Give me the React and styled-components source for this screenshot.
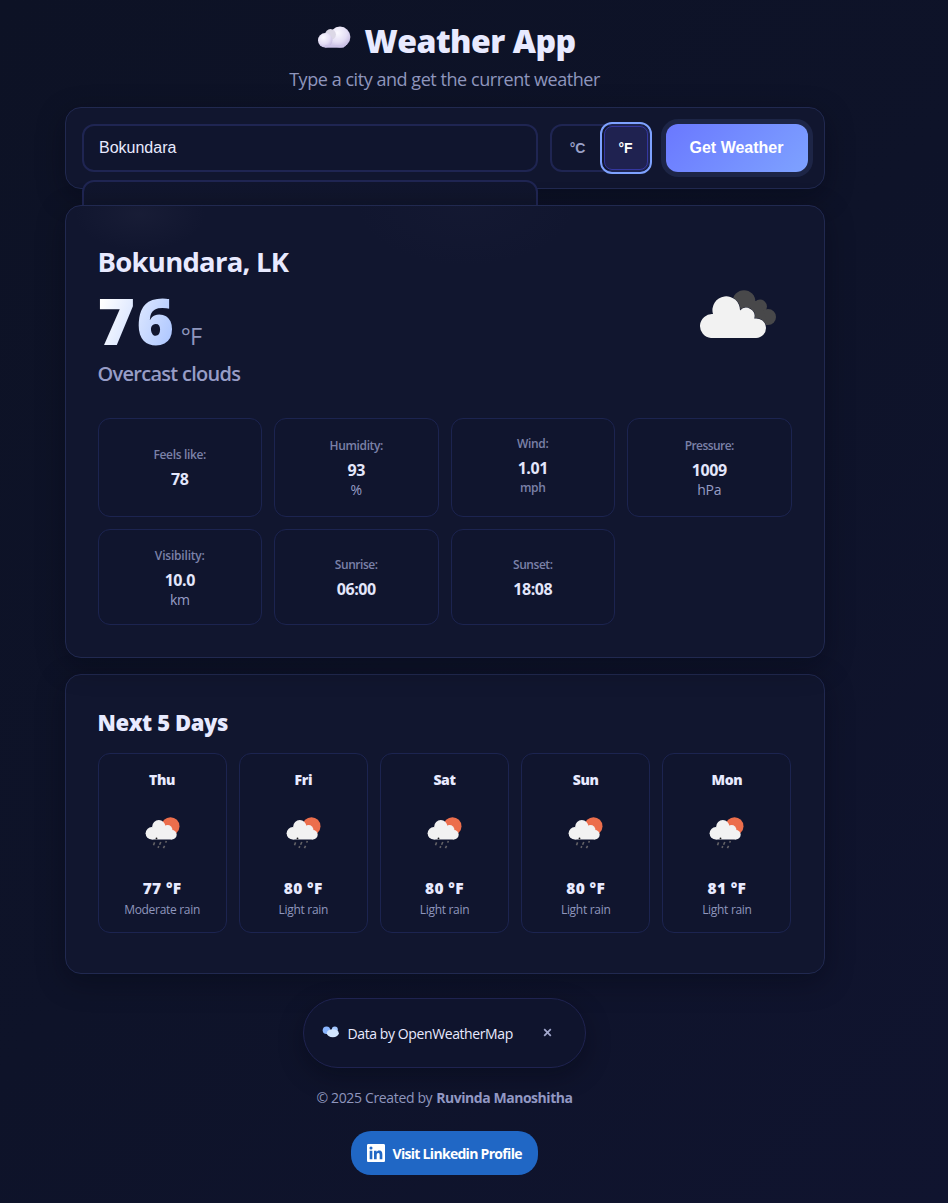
import React from "react";
import styled, { createGlobalStyle } from "styled-components";

const GlobalStyle = createGlobalStyle`
  *, *::before, *::after { box-sizing: border-box; }
  html { background: #0f132b; }
  body {
    margin: 0;
    font-family: "Open Sans", "Noto Sans", sans-serif;
    color: #e8eaff;
  }
`;

const Page = styled.div`
  min-height: 1203px;
  padding: 20px 123px 28px 64.5px;
  background: linear-gradient(135deg, #0d1225 0%, #0e1329 50%, #10142f 100%);
  overflow: hidden;
`;

const Column = styled.main`
  width: 760px;
  display: flex;
  flex-direction: column;
  align-items: center;
`;

const Line = styled.span`
  display: block;
  white-space: nowrap;
  font-size: ${(p) => p.$size}px;
  line-height: ${(p) => p.$lh}px;
  font-weight: ${(p) => p.$weight || 400};
  letter-spacing: ${(p) => p.$track || 0}px;
  color: ${(p) => p.$color || "#e8eaff"};
`;

const Header = styled.header`
  display: flex;
  flex-direction: column;
  align-items: center;
  height: 87px;
`;

const Brand = styled.h1`
  display: flex;
  gap: 13px;
  margin: 0 0 4px 4px;
  height: 42px;
  svg { margin-top: 5px; }
`;

const Panel = styled.section`
  width: 100%;
  border: 1px solid #212950;
  border-radius: 16px;
  background: #11162f;
  box-shadow: 0 8px 28px rgba(4, 6, 14, 0.34);
`;

const SearchPanel = styled(Panel)`
  display: flex;
  height: 82px;
  padding: 16px;
`;

const Field = styled.div`
  position: relative;
  width: 456px;
  height: 48px;
  margin-right: 12px;
`;

const Input = styled.input`
  width: 100%;
  height: 100%;
  padding: 0 15.5px;
  border: 2px solid #1f2552;
  border-radius: 12px;
  outline: none;
  background: #10152e;
  color: #e8eaff;
  font: 16px "Liberation Sans", Arial, sans-serif;
`;

const Suggestions = styled.div`
  position: absolute;
  top: 56px;
  left: 0;
  width: 100%;
  height: 60px;
  border: 2px solid #1f2552;
  border-radius: 12px;
  background: linear-gradient(#11162e, #0e1326);
`;

const UnitToggle = styled.div`
  display: flex;
  width: 100px;
  height: 48px;
  margin-right: 16px;
  border: 2px solid #1f2552;
  border-radius: 12px;
  background: #10152e;
`;

const UnitButton = styled.button`
  width: ${(p) => (p.$active ? 44 : 52)}px;
  height: 44px;
  padding: 0;
  border: 1px solid ${(p) => (p.$active ? "#3437a0" : "transparent")};
  border-radius: 8px;
  outline: ${(p) => (p.$active ? "2px solid #7ea2ff" : "none")};
  outline-offset: 2px;
  background: ${(p) => (p.$active ? "#1f2250" : "transparent")};
  color: ${(p) => (p.$active ? "#ffffff" : "#9aa0c8")};
  font: bold 14px "Liberation Sans", Arial, sans-serif;
`;

const SubmitButton = styled.button`
  width: 142px;
  height: 48px;
  padding: 0;
  border: 0;
  border-radius: 12px;
  background: linear-gradient(135deg, #6a78ff, #7ea2ff);
  box-shadow: 0 0 0 5px #1d2546;
  color: #fff;
  font: bold 16px "Liberation Sans", Arial, sans-serif;
`;

const CurrentPanel = styled(Panel)`
  position: relative;
  height: 453px;
  margin-top: 16px;
  padding: 32px;
  background:
    radial-gradient(ellipse 65px 36px at 74px 8px, rgba(60, 62, 90, 0.16), transparent),
    radial-gradient(ellipse 110px 60px at 400px 0px, rgba(50, 52, 84, 0.08), transparent),
    #11162f;
`;

const Summary = styled.div`
  display: flex;
  justify-content: space-between;
  height: 180px;
  padding-top: 4px;
  svg { margin: 47px 13.5px 0 0; }
`;

const TempRow = styled.div`
  display: flex;
  align-items: baseline;
  gap: 5px;
  height: 78px;
`;

const Temp = styled(Line)`
  background: linear-gradient(110deg, #ffffff 10%, #a4c0ff 100%);
  background-clip: text;
  -webkit-background-clip: text;
  color: transparent;
`;

const Stats = styled.div`
  display: grid;
  grid-template-columns: repeat(4, 1fr);
  grid-template-rows: 99px 96px;
  gap: 12px;
`;

const Tile = styled.div`
  display: flex;
  flex-direction: column;
  align-items: center;
  justify-content: center;
  border: 1px solid #1c2450;
  border-radius: 12px;
  background: #10152e;
`;

const Unit = styled(Line)`
  margin-bottom: ${(p) => (p.$small ? 9 : 4)}px;
`;

const ForecastPanel = styled(Panel)`
  height: 300px;
  margin-top: 16px;
  padding: 31px 32px;
`;

const Days = styled.div`
  display: grid;
  grid-template-columns: repeat(5, 1fr);
  gap: 12px;
  margin-top: 15px;
`;

const DayTile = styled(Tile)`
  justify-content: flex-start;
  height: 180px;
  padding-top: 16px;
  svg { margin: 18px 0 19px 1px; }
`;

const Notice = styled.div`
  display: flex;
  align-items: center;
  width: 283px;
  height: 70px;
  margin: 24px 1px 0 0;
  padding: 0 31px 0 18px;
  border: 1px solid #1f2350;
  border-radius: 35px;
  background: #0f142d;
  box-shadow: 0 8px 24px rgba(4, 6, 14, 0.35);
  svg:first-child { margin: -2px 8px 0 0; }
  svg:last-child { margin: -1px 2px 0 auto; }
  span { padding-top: 1px; }
`;

const Credit = styled.div`
  display: flex;
  gap: 4px;
  margin-top: 20px;
`;

const ProfileLink = styled.a`
  display: flex;
  align-items: center;
  gap: 8px;
  width: 187px;
  height: 44px;
  margin: 23px 1px 0 0;
  padding-left: 16px;
  border-radius: 20px;
  background: #2067c5;
  text-decoration: none;
  span { padding-top: 2px; }
`;

const BrandCloud = () => (
  <svg width="34" height="24" viewBox="0 0 34 24">
    <defs>
      <radialGradient id="puff" cx="0.38" cy="0.3" r="0.75">
        <stop offset="0" stopColor="#fbfaff" />
        <stop offset="0.6" stopColor="#e4def5" />
        <stop offset="1" stopColor="#c2b7df" />
      </radialGradient>
      <linearGradient id="base" x1="0" y1="0" x2="0" y2="1">
        <stop offset="0" stopColor="#eeeaf8" />
        <stop offset="1" stopColor="#c9bfe6" />
      </linearGradient>
    </defs>
    <rect x="4" y="11" width="26" height="11.4" rx="5" fill="url(#base)" />
    <circle cx="23" cy="12" r="10.4" fill="url(#puff)" />
    <circle cx="13.5" cy="9.5" r="5.4" fill="#dcd8e6" />
    <circle cx="8.2" cy="15.3" r="7.2" fill="url(#puff)" />
    <path d="M8 20h19v2.4H8z" fill="#cdc4e8" />
  </svg>
);

const OvercastIcon = () => (
  <svg width="80" height="50" viewBox="0 0 80 50">
    <g fill="#48484a">
      <circle cx="46" cy="12.6" r="11.4" />
      <circle cx="62" cy="17.6" r="7" />
      <circle cx="70" cy="28" r="8" />
      <path d="M40 12h22l8 24H48z" />
    </g>
    <g fill="#f2f2f2" stroke="#11162e" strokeWidth="1" paintOrder="stroke">
      <path d="M13 49A11.9 11.9 0 1 1 15 25.1A13.8 13.8 0 1 1 42 21.5A8.4 8.4 0 0 1 56.2 29.6A9.8 9.8 0 1 1 58 49Z" />
    </g>
  </svg>
);

const RainIcon = () => (
  <svg width="50" height="50" viewBox="0 0 50 50">
    <circle cx="32.5" cy="18.2" r="9" fill="#ec6e4c" />
    <g fill="#f2f2f2">
      <circle cx="13.8" cy="25.3" r="6.2" />
      <circle cx="20.8" cy="18.6" r="6.6" />
      <circle cx="29.6" cy="21.8" r="4.8" />
      <circle cx="34" cy="26.8" r="4.7" />
      <path d="M13.8 22h18l2.2 9.5H13.8z" />
    </g>
    <circle cx="18.5" cy="30.4" r="0.9" fill="#1b1b1d" />
    <path
      d="M16.6 34.4l-1.1 2.8M22.8 34l-1.2 2.8M28.4 33l-.8 1.6M20.8 38.2l-.8 1.6M26.6 37.8l-1.2 2.4"
      stroke="#646266"
      strokeWidth="1.6"
      fill="none"
    />
  </svg>
);

const SourceIcon = () => (
  <svg width="18" height="14" viewBox="0 0 18 14">
    <circle cx="4.5" cy="5.2" r="3.8" fill="#8ab6ff" />
    <circle cx="12.8" cy="4.6" r="3" fill="#a5c8ff" />
    <ellipse cx="10.8" cy="8.2" rx="6" ry="4" fill="#d3e6ff" />
  </svg>
);

const CloseIcon = () => (
  <svg width="9" height="9" viewBox="0 0 9 9">
    <path d="M1.2 1.2l6.6 6.6M7.8 1.2L1.2 7.8" stroke="#a3a8cd" strokeWidth="1.7" />
  </svg>
);

const LinkedinIcon = () => (
  <svg width="18" height="18" viewBox="0 0 24 24" fill="#fff">
    <path d="M20.447 20.452h-3.554v-5.569c0-1.328-.027-3.037-1.852-3.037-1.853 0-2.136 1.445-2.136 2.939v5.667H9.351V9h3.414v1.561h.046c.477-.9 1.637-1.85 3.37-1.85 3.601 0 4.267 2.37 4.267 5.455v6.286zM5.337 7.433a2.062 2.062 0 1 1 0-4.125 2.062 2.062 0 0 1 0 4.125zM7.119 20.452H3.555V9h3.564v11.452zM22.225 0H1.771C.792 0 0 .774 0 1.729v20.542C0 23.227.792 24 1.771 24h20.451C23.2 24 24 23.227 24 22.271V1.729C24 .774 23.2 0 22.222 0h.003z" />
  </svg>
);

const stats = [
  { label: "Feels like:", value: "78", track: -0.35 },
  { label: "Humidity:", value: "93", unit: "%", track: -0.35 },
  { label: "Wind:", value: "1.01", unit: "mph", small: true, track: -0.35 },
  { label: "Pressure:", value: "1009", unit: "hPa", track: -0.55 },
  { label: "Visibility:", value: "10.0", unit: "km", track: -0.2 },
  { label: "Sunrise:", value: "06:00", track: -0.45 },
  { label: "Sunset:", value: "18:08", track: -0.45 },
];

const days = [
  ["Thu", "77 °F", "Moderate rain"],
  ["Fri", "80 °F", "Light rain"],
  ["Sat", "80 °F", "Light rain"],
  ["Sun", "80 °F", "Light rain"],
  ["Mon", "81 °F", "Light rain"],
];

export default function App() {
  return (
    <Page>
      <GlobalStyle />
      <Column>
        <Header>
          <Brand>
            <BrandCloud />
            <Line $size={32} $lh={42} $weight={800} $track={-0.5}>Weather App</Line>
          </Brand>
          <Line $size={18} $lh={26} $track={-0.45} $color="#8f96bd">
            Type a city and get the current weather
          </Line>
        </Header>

        <SearchPanel>
          <Field>
            <Input defaultValue="Bokundara" />
            <Suggestions />
          </Field>
          <UnitToggle>
            <UnitButton>°C</UnitButton>
            <UnitButton $active>°F</UnitButton>
          </UnitToggle>
          <SubmitButton>Get Weather</SubmitButton>
        </SearchPanel>

        <CurrentPanel>
          <Summary>
            <div>
              <Line $size={27.5} $lh={40} $weight={700} $track={-0.75}>Bokundara, LK</Line>
              <TempRow>
                <Temp $size={64} $lh={77} $weight={800} $track={1.6}>76</Temp>
                <Line $size={23.5} $lh={30} $color="#8f96bd" $track={-0.8}>°F</Line>
              </TempRow>
              <Line $size={20} $lh={28} $weight={600} $track={-0.72} $color="#979dc6">
                Overcast clouds
              </Line>
            </div>
            <OvercastIcon />
          </Summary>
          <Stats>
            {stats.map((s) => (
              <Tile key={s.label}>
                <Line $size={12} $lh={24} $weight={600} $track={s.track} $color="#7b81a8">{s.label}</Line>
                <Line $size={16} $lh={25} $weight={700} $track={-0.45} $color="#e3e6fb">{s.value}</Line>
                {s.unit && (
                  <Unit
                    $small={s.small}
                    $size={s.small ? 12 : 14}
                    $lh={s.small ? 13 : 14}
                    $weight={s.small ? 600 : 400}
                    $track={-0.3}
                    $color={s.small ? "#7b81a8" : "#979dc6"}
                  >
                    {s.unit}
                  </Unit>
                )}
              </Tile>
            ))}
          </Stats>
        </CurrentPanel>

        <ForecastPanel>
          <Line $size={22} $lh={32} $weight={800} $track={-0.4}>Next 5 Days</Line>
          <Days>
            {days.map(([day, temp, text]) => (
              <DayTile key={day}>
                <Line $size={14} $lh={20} $weight={800} $track={-0.35}>{day}</Line>
                <RainIcon />
                <Line $size={15.5} $lh={22} $weight={800} $track={0.35}>{temp}</Line>
                <Line $size={12} $lh={22} $track={-0.3} $color="#8f96bd">{text}</Line>
              </DayTile>
            ))}
          </Days>
        </ForecastPanel>

        <Notice>
          <SourceIcon />
          <Line $size={14} $lh={18} $track={-0.4}>Data by OpenWeatherMap</Line>
          <CloseIcon />
        </Notice>

        <Credit>
          <Line $size={14} $lh={20} $track={-0.35} $color="#8f96bd">© 2025 Created by</Line>
          <Line $size={14} $lh={20} $weight={700} $track={-0.46} $color="#9298c3">Ruvinda Manoshitha</Line>
        </Credit>

        <ProfileLink href="#">
          <LinkedinIcon />
          <Line $size={14} $lh={20} $weight={700} $track={-0.7} $color="#fff">Visit Linkedin Profile</Line>
        </ProfileLink>
      </Column>
    </Page>
  );
}
